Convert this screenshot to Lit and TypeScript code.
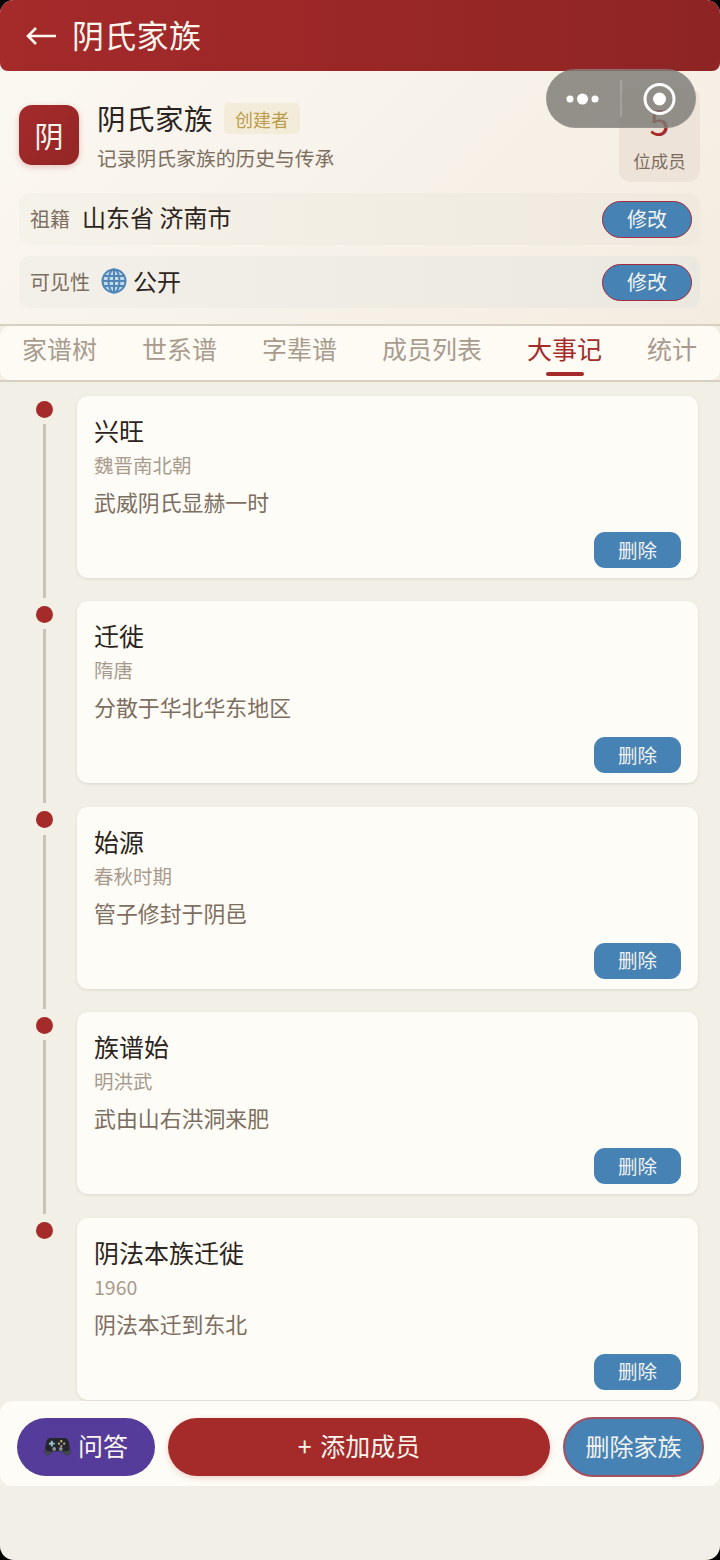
import { LitElement, html, css, svg } from "lit";
import { customElement } from "lit/decorators.js";

const EVENTS = [
  { t: "兴旺", d: "魏晋南北朝", s: "武威阴氏显赫一时" },
  { t: "迁徙", d: "隋唐", s: "分散于华北华东地区" },
  { t: "始源", d: "春秋时期", s: "管子修封于阴邑" },
  { t: "族谱始", d: "明洪武", s: "武由山右洪洞来肥" },
  { t: "阴法本族迁徙", d: "1960", s: "阴法本迁到东北" },
];
const TABS = ["家谱树", "世系谱", "字辈谱", "成员列表", "大事记", "统计"];

const globe = svg`<svg viewBox="0 0 26 26" width="26" height="26"><circle cx="13" cy="13" r="12" fill="#c4dcee"/><g fill="none" stroke="#4f86b6" stroke-width="2"><circle cx="13" cy="13" r="11.500"/><ellipse cx="13" cy="13" rx="5.500" ry="11.500"/><path d="M13 1.500v23M2.500 8h21M2.500 18h21M1.500 13h23"/></g></svg>`;
const pad = svg`<svg viewBox="0 0 28 22" width="27" height="21"><path d="M7 2h14c3 0 4.500 2 5 5l1.500 9c.5 3-2.500 5.500-5 3.500L18 16h-8l-4.500 3.500c-2.500 2-5.500-.5-5-3.500L2 7c.5-3 2-5 5-5z" fill="#24262b"/><path d="M1.500 13 .5 16c-.5 3 2.500 5.500 5 3.500L10 16H3z" fill="#45474f"/><path d="M26.500 13l1 3c.5 3-2.500 5.500-5 3.500L18 16h7z" fill="#45474f"/><g fill="#9cc0cc"><rect x="7" y="5" width="2" height="6"/><rect x="5" y="7" width="6" height="2"/></g><circle cx="18" cy="5.500" r="1.200" fill="#d8c36a"/><circle cx="21" cy="8" r="1.200" fill="#9fc58a"/><circle cx="15.500" cy="8" r="1.200" fill="#9fc58a"/><circle cx="18" cy="10.500" r="1.200" fill="#c98f7f"/><circle cx="10.500" cy="13.500" r="2" fill="#8a9597"/><circle cx="17.500" cy="13.500" r="2" fill="#8a9597"/></svg>`;

@customElement("app-root")
export class AppRoot extends LitElement {
  static styles = css`
    :host {
      display: block;
      width: 720px;
      height: 1560px;
      background: #000;
      font-family: "Noto Sans CJK SC", "Noto Sans", sans-serif;
      color: #2c2420;
    }
    .screen {
      position: relative;
      width: 720px;
      height: 1560px;
      overflow: hidden;
      border-radius: 14px;
      background: #f2efe6;
      display: flex;
      flex-direction: column;
    }
    .top {
      height: 71px;
      box-sizing: border-box;
      flex: none;
      background: linear-gradient(90deg, #a52a2a, #8e2424);
      border-radius: 0 0 8px 8px;
      display: flex;
      align-items: center;
      padding: 0 0 3px 26px;
      gap: 16px;
      color: #fdf6ee;
      position: relative;
      z-index: 1;
      font-size: 32px;
      letter-spacing: 0.300px;
    }
    .top svg { display: block; margin-top: 3px; }
    .info {
      flex: none;
      height: 253px;
      box-sizing: border-box;
      padding: 34px 20px 16px 19px;
      background: linear-gradient(135deg, #fbf8f2, #f3ece0);
      display: flex;
      flex-direction: column;
    }
    .head {
      height: 77px;
      flex: none;
      display: flex;
      align-items: flex-start;
      gap: 18px;
    }
    .avatar {
      width: 60px;
      height: 60px;
      border-radius: 13px;
      background: linear-gradient(135deg, #a52a2a, #932626);
      color: #fdf6ee;
      font-size: 29px;
      display: flex;
      align-items: center;
      justify-content: center;
      box-shadow: 0 2px 6px rgba(165, 42, 42, 0.25);
      flex: none;
    }
    .who { flex: 1; min-width: 0; margin-top: -2px; }
    .name-line { display: flex; align-items: center; gap: 11px; height: 31px; }
    .name { font-size: 28.500px; line-height: 31px; letter-spacing: 0.500px; margin-top: -2px; }
    .badge {
      font-size: 18px;
      color: #bd9c47;
      background: #f3ecdb;
      border-radius: 5px;
      height: 31px;
      width: 76px;
      display: flex;
      align-items: center;
      justify-content: center;
    }
    .desc { font-size: 19.800px; line-height: 26px; margin-top: 11px; color: #7d6e62; }
    .stat {
      width: 81px;
      height: 94px;
      margin-top: -17px;
      border-radius: 12px;
      background: #eee3d9;
      display: flex;
      flex-direction: column;
      align-items: center;
      justify-content: flex-end;
      padding-bottom: 9px;
      box-sizing: border-box;
      flex: none;
    }
    .stat b { font-weight: 400; font-size: 36px; line-height: 40px; color: #a52a2a; }
    .stat span { font-size: 17.500px; line-height: 24px; color: #7d6e62; margin-top: 9px; }
    .row {
      height: 52px;
      flex: none;
      margin-top: 11px;
      border-radius: 10px;
      display: flex;
      align-items: center;
      box-sizing: border-box;
      padding: 0 8px 2px 11px;
      background: linear-gradient(90deg, #f5f2e9, #efe9de);
    }
    .row.b { background: linear-gradient(90deg, #f3f0e9, #ebe8e0); }
    .key { font-size: 20px; color: #7d6e62; }
    .val { font-size: 24px; margin: -2px 0 0 12px; flex: 1; display: flex; align-items: center; gap: 6px; line-height: 30px; }
    .row.b .val { margin: 0 0 0 11px; font-size: 24px; }
    .mini {
      width: 90px;
      height: 37px;
      margin-top: 2px;
      box-sizing: border-box;
      border-radius: 19px;
      background: #4682b4;
      border: 1.500px solid #a52a3f;
      color: #f6f5f0;
      font-size: 20px;
      padding-bottom: 2px;
      display: flex;
      align-items: center;
      justify-content: center;
    }
    .tabbar {
      flex: none;
      height: 58px;
      box-sizing: border-box;
      background: #f3ede2;
      border-top: 2px solid #d9d0c4;
      border-bottom: 2px solid #d9d0c4;
    }
    .tabs {
      height: 100%;
      background: #fefbf5;
      border-radius: 10px;
      display: flex;
      padding-left: 22px;
      gap: 45px;
      font-size: 25px;
      color: #a89b8e;
    }
    .tab { position: relative; line-height: 45px; height: 54px; white-space: nowrap; }
    .tab.on { color: #a52a2a; }
    .tab.on::after {
      content: "";
      position: absolute;
      left: 19px;
      width: 38px;
      height: 4px;
      bottom: 4px;
      border-radius: 2px;
      background: #a52a2a;
    }
    .list {
      flex: 1;
      min-height: 0;
      overflow: hidden;
      padding: 14px 22px 0 0;
      display: flex;
      flex-direction: column;
      gap: 23.400px;
    }
    .item { display: flex; flex: none; height: 182px; }
    .rail { width: 77px; flex: none; position: relative; }
    .dot {
      position: absolute;
      left: 36px;
      top: 4.500px;
      width: 17px;
      height: 17px;
      border-radius: 50%;
      background: #a52a2a;
    }
    .line {
      position: absolute;
      left: 43px;
      top: 28px;
      width: 2.500px;
      height: 174px;
      background: #cbc2b6;
    }
    .item:last-child .line { display: none; }
    .card {
      flex: 1;
      box-sizing: border-box;
      background: #fefcf6;
      border-radius: 11px;
      box-shadow: 0 1px 3px rgba(120, 100, 80, 0.16);
      padding: 18px 17px 10px 17px;
      display: flex;
      flex-direction: column;
    }
    .t { font-size: 25px; line-height: 32px; }
    .d { font-size: 19.500px; line-height: 26px; margin-top: 6px; color: #a89b8e; }
    .s { font-size: 21.900px; line-height: 30px; margin-top: 9px; color: #7d6e62; }
    .del {
      margin-top: auto;
      align-self: flex-end;
      width: 87px;
      height: 36px;
      box-sizing: border-box;
      padding-bottom: 2px;
      border-radius: 11px;
      background: #4682b4;
      color: #f1f3f2;
      font-size: 19.500px;
      display: flex;
      align-items: center;
      justify-content: center;
    }
    .foot {
      position: absolute;
      left: 0;
      right: 0;
      top: 1401px;
      height: 85px;
      box-sizing: border-box;
      background: #fefcf6;
      border-radius: 12px;
      display: flex;
      align-items: center;
      gap: 13px;
      padding: 6px 16px 0 17px;
      color: #fbf5ee;
      font-size: 25px;
    }
    .btn {
      height: 58px;
      border-radius: 29px;
      display: flex;
      align-items: center;
      justify-content: center;
      flex: none;
      box-sizing: border-box;
      padding-bottom: 3px;
      white-space: nowrap;
    }
    .qa { width: 138px; background: #553c9a; gap: 7px; }
    .qa svg { margin-top: 3px; }
    .add { width: 382px; background: #a52a2a; box-shadow: 0 2px 6px rgba(165, 42, 42, 0.2); word-spacing: 3px; }
    .rm { width: 141px; height: 60px; border-radius: 30px; background: #4682b4; border: 2px solid #a5505f; color: #f1f3f2; font-size: 24px; }
    .capsule {
      position: absolute;
      left: 546px;
      top: 69px;
      width: 150px;
      height: 59px;
      border-radius: 30px;
      background: rgba(125, 122, 117, 0.82);
      z-index: 2;
      box-shadow: inset 0 0 0 1px rgba(255, 255, 255, 0.06);
    }
    .capsule svg { position: absolute; left: 0; top: 0; }
  `;

  render() {
    return html`<div class="screen">
      <div class="top">
        <svg width="30" height="22" viewBox="0 0 30 22" fill="none" stroke="#fdf6ee" stroke-width="2.600"><path d="M30 11H2M10 3l-8 8 8 8"/></svg>
        <span>阴氏家族</span>
      </div>
      <div class="info">
        <div class="head">
          <div class="avatar">阴</div>
          <div class="who">
            <div class="name-line"><span class="name">阴氏家族</span><span class="badge">创建者</span></div>
            <div class="desc">记录阴氏家族的历史与传承</div>
          </div>
          <div class="stat"><b>5</b><span>位成员</span></div>
        </div>
        <div class="row"><span class="key">祖籍</span><span class="val">山东省 济南市</span><span class="mini">修改</span></div>
        <div class="row b"><span class="key">可见性</span><span class="val">${globe}公开</span><span class="mini">修改</span></div>
      </div>
      <div class="tabbar">
        <div class="tabs">
          ${TABS.map((t, i) => html`<div class="tab ${i === 4 ? "on" : ""}">${t}</div>`)}
        </div>
      </div>
      <div class="list">
        ${EVENTS.map(
          (e) => html`<div class="item">
            <div class="rail"><span class="dot"></span><span class="line"></span></div>
            <div class="card">
              <div class="t">${e.t}</div>
              <div class="d">${e.d}</div>
              <div class="s">${e.s}</div>
              <div class="del">删除</div>
            </div>
          </div>`
        )}
      </div>
      <div class="foot">
        <div class="btn qa">${pad}<span>问答</span></div>
        <div class="btn add">+ 添加成员</div>
        <div class="btn rm">删除家族</div>
      </div>
      <div class="capsule">
        <svg width="150" height="59" viewBox="0 0 150 59">
          <circle cx="24" cy="30" r="3.500" fill="#fff"/><circle cx="36.500" cy="30" r="5.500" fill="#fff"/><circle cx="49" cy="30" r="3.500" fill="#fff"/>
          <rect x="74.500" y="11" width="1" height="37" fill="rgba(255,255,255,0.35)"/>
          <circle cx="113.500" cy="30" r="14.500" fill="none" stroke="#fff" stroke-width="3"/><circle cx="113.500" cy="30" r="6.500" fill="#fff"/>
        </svg>
      </div>
    </div>`;
  }
}
